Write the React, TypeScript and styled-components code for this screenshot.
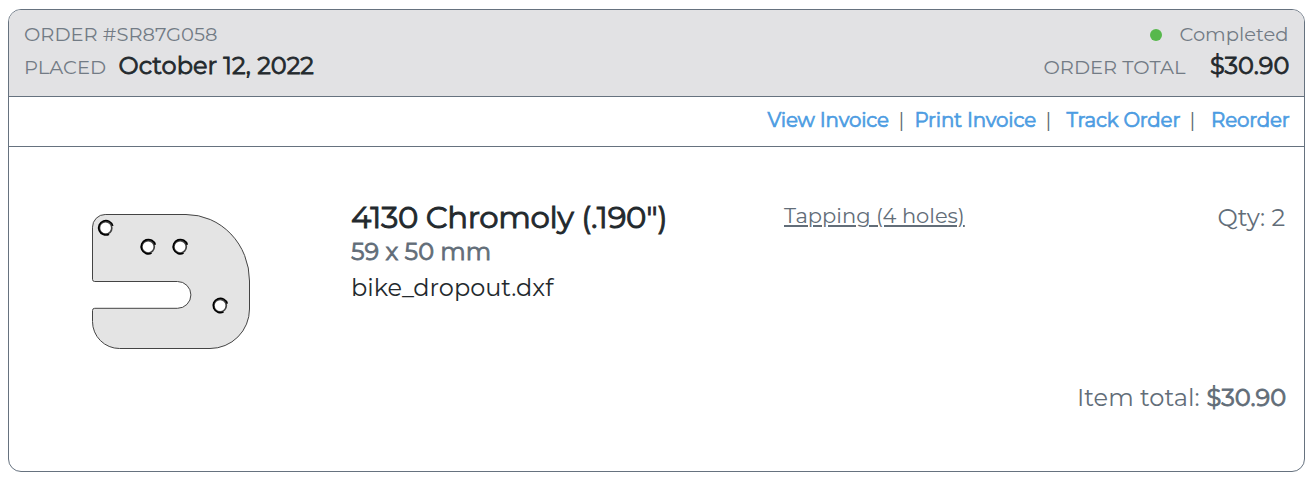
import React from 'react';
import styled, { createGlobalStyle } from 'styled-components';

const GlobalStyle = createGlobalStyle`
  body {
    margin: 0;
    background: #fff;
    font-family: Montserrat, Inter, "Liberation Sans", sans-serif;
    font-weight: 400;
    color: #626d78;
  }
`;

const Card = styled.article`
  box-sizing: border-box;
  width: 1297px;
  height: 463px;
  margin: 9px 0 0 8px;
  border: 1px solid #66727f;
  border-radius: 13px;
  overflow: hidden;
  display: flex;
  flex-direction: column;
`;

const Header = styled.header`
  display: flex;
  justify-content: space-between;
  box-sizing: border-box;
  height: 87px;
  padding: 8px 14.5px 0 15px;
  background: #e2e2e4;
  border-bottom: 1px solid #66727f;
`;

const HeaderColumn = styled.div<{ $end?: boolean }>`
  display: flex;
  flex-direction: column;
  align-items: ${(p) => (p.$end ? 'flex-end' : 'flex-start')};
`;

const HeaderLine = styled.div`
  display: flex;
  align-items: baseline;
  height: 31px;
  line-height: 33px;
`;

const Label = styled.span<{ $w: number }>`
  width: ${(p) => p.$w}px;
  font-size: 19.5px;
  white-space: nowrap;
  color: #727b85;
`;

const Strong = styled.strong<{ $w: number }>`
  width: ${(p) => p.$w}px;
  font-size: 24px;
  font-weight: 400;
  -webkit-text-stroke: 0.8px currentColor;
  white-space: nowrap;
  color: #23292d;
`;

const Spacer = styled.span<{ $w: number }>`
  width: ${(p) => p.$w}px;
`;

const StatusDot = styled.span`
  align-self: center;
  width: 12px;
  height: 12px;
  margin: 2px 17.5px 0 0;
  border-radius: 50%;
  background: #57b84c;
`;

const Actions = styled.nav`
  display: flex;
  justify-content: flex-end;
  box-sizing: border-box;
  height: 50px;
  padding: 0 15px;
  font-size: 19.8px;
  line-height: 46px;
  border-bottom: 1px solid #66727f;
`;

const ActionLink = styled.a<{ $w: number }>`
  width: ${(p) => p.$w}px;
  letter-spacing: -0.16px;
  -webkit-text-stroke: 0.7px currentColor;
  white-space: nowrap;
  color: #4c9ce2;
`;

const Divider = styled.span<{ $l: number; $r: number }>`
  display: flex;
  justify-content: center;
  width: 7px;
  margin: 0 ${(p) => p.$r}px 0 ${(p) => p.$l}px;
`;

const Item = styled.section`
  display: flex;
  flex: 1;
  padding: 50px 18px 0 79px;
`;

const Drawing = styled.svg`
  flex: none;
  width: 170px;
  height: 145px;
  margin-top: 13px;
`;

const Details = styled.div`
  width: 433px;
  margin-left: 93px;
`;

const Title = styled.h2`
  margin: 0;
  font-size: 30.8px;
  font-weight: 400;
  letter-spacing: -0.36px;
  -webkit-text-stroke: 0.9px currentColor;
  line-height: 40px;
  white-space: nowrap;
  color: #23292d;
`;

const Dimensions = styled.div`
  font-size: 24px;
  -webkit-text-stroke: 0.8px currentColor;
  line-height: 30px;
`;

const FileName = styled.div`
  margin-top: 3px;
  font-size: 24px;
  line-height: 36px;
  color: #23292d;
`;

const Service = styled.a`
  width: 181px;
  font-size: 21px;
  line-height: 37px;
  text-decoration: underline;
  text-decoration-thickness: 2px;
  text-underline-offset: 2px;
  white-space: nowrap;
`;

const Totals = styled.div`
  display: flex;
  flex: 1;
  flex-direction: column;
  align-items: flex-end;
  justify-content: space-between;
  height: 221px;
  line-height: 41px;
`;

const TotalLine = styled.div`
  display: flex;
`;

const Amount = styled.span<{ $w: number; $bold?: boolean }>`
  width: ${(p) => p.$w}px;
  font-size: 24.1px;
  -webkit-text-stroke: ${(p) => (p.$bold ? 0.8 : 0)}px currentColor;
  white-space: nowrap;
`;

const HOLES = [
  [17.6, 17.9],
  [60.1, 36.8],
  [92.1, 36.8],
  [132.1, 95.6],
];

function PartDrawing() {
  return (
    <Drawing viewBox="0 0 170 145" fill="none">
      <path
        d="M17.2 4.5H98A63.5 66.5 0 0 1 161.5 71V99A39.5 39.5 0 0 1 122 138.5H31.5A27 27 0 0 1 4.5 111.500V100.500Q4.500 98.300 6.700 98.300H89.500A13.400 13.400 0 0 0 89.500 71.500H6.700Q4.500 71.500 4.500 69.300V17.200A12.700 12.700 0 0 1 17.200 4.500Z"
        fill="#e4e4e4"
        stroke="#444"
      />
      {HOLES.map(([x, y]) => (
        <g key={x} transform={`translate(${x} ${y})`}>
          <circle r="6.200" fill="#fff" stroke="#444" strokeWidth="1.700" />
          <path d="M7.200 -2A7.200 7.200 0 1 0 3.500 6.300" stroke="#000" strokeWidth="1.600" />
        </g>
      ))}
    </Drawing>
  );
}

export default function App() {
  return (
    <>
      <GlobalStyle />
      <Card>
        <Header>
          <HeaderColumn>
            <HeaderLine>
              <Label $w={194}>ORDER #SR87G058</Label>
            </HeaderLine>
            <HeaderLine>
              <Label $w={94.5}>PLACED</Label>
              <Strong $w={196}>October 12, 2022</Strong>
            </HeaderLine>
          </HeaderColumn>
          <HeaderColumn $end>
            <HeaderLine>
              <StatusDot />
              <Label $w={110}>Completed</Label>
            </HeaderLine>
            <HeaderLine>
              <Label $w={143}>ORDER TOTAL</Label>
              <Spacer $w={23.5} />
              <Strong $w={79.5}>$30.90</Strong>
            </HeaderLine>
          </HeaderColumn>
        </Header>
        <Actions>
          <ActionLink $w={122}>View Invoice</ActionLink>
          <Divider $l={8.5} $r={9.5}>|</Divider>
          <ActionLink $w={123}>Print Invoice</ActionLink>
          <Divider $l={7.5} $r={14.5}>|</Divider>
          <ActionLink $w={115}>Track Order</ActionLink>
          <Divider $l={7.5} $r={15}>|</Divider>
          <ActionLink $w={78}>Reorder</ActionLink>
        </Actions>
        <Item>
          <PartDrawing />
          <Details>
            <Title>4130 Chromoly (.190")</Title>
            <Dimensions>59 x 50 mm</Dimensions>
            <FileName>bike_dropout.dxf</FileName>
          </Details>
          <Service>Tapping (4 holes)</Service>
          <Totals>
            <Amount $w={68.5}>Qty: 2</Amount>
            <TotalLine>
              <Amount $w={129.5}>Item total:</Amount>
              <Amount $w={79.5} $bold>$30.90</Amount>
            </TotalLine>
          </Totals>
        </Item>
      </Card>
    </>
  );
}
